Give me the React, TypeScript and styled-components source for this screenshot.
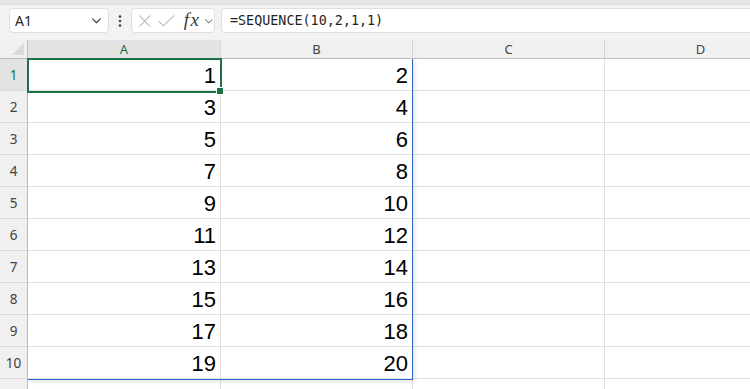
import * as React from "react";
import styled, { createGlobalStyle } from "styled-components";

const GlobalStyle = createGlobalStyle`
  body {
    margin: 0;
    background: #ffffff;
    font-family: "Noto Sans", "Open Sans", sans-serif;
  }
`;

const GREEN = "#1e7145";
const BLUE = "#2f66c9";
const GRID = "#e1e1e1";

const COLS = [193, 192, 192, 192];
const LETTERS = ["A", "B", "C", "D"];

export const Page = styled.div`
  width: 750px;
  height: 389px;
  overflow: hidden;
  display: flex;
  flex-direction: column;
`;

export const TopStrip = styled.div`
  height: 5px;
  background: #e7e6e5;
  box-shadow: inset 0 -1px 2px rgba(0, 0, 0, 0.04);
`;

export const Toolbar = styled.div`
  height: 35px;
  box-sizing: border-box;
  padding: 3px 0 0 9px;
  background: #f3f2f1;
  display: flex;
  align-items: flex-start;
  flex-shrink: 0;
`;

const Box = styled.div`
  height: 25px;
  box-sizing: border-box;
  background: #ffffff;
  border: 1px solid #e1dfdd;
  border-radius: 4px;
  display: flex;
  align-items: center;
`;

export const NameBox = styled(Box)`
  width: 100px;
  padding: 0 6px 0 5px;
  justify-content: space-between;
  font-size: 14px;
  color: #242424;
`;

export const Dots = styled.div`
  width: 22px;
  height: 25px;
  display: flex;
  align-items: center;
  justify-content: center;
`;

export const FxBox = styled(Box)`
  width: 84px;
  padding: 0 0 0 6px;
`;

export const FxLabel = styled.span`
  font-family: "Liberation Serif", serif;
  font-style: italic;
  font-size: 19px;
  color: #3b3b3b;
  margin: -2px 4px 0 8px;
  letter-spacing: 1.5px;
`;

export const FormulaBox = styled(Box)`
  flex: 1;
  margin-left: 6px;
  border-right: none;
  border-radius: 4px 0 0 4px;
  padding-left: 8px;
  font-family: "DejaVu Sans Mono", monospace;
  font-size: 13.4px;
  color: #1f1f1f;
`;

export const SheetWrap = styled.div`
  position: relative;
  flex: 1;
  overflow: hidden;
`;

export const Sheet = styled.div`
  display: grid;
  grid-template-columns: 28px ${COLS.map((c) => `${c}px`).join(" ")};
  grid-template-rows: 19px;
  grid-auto-rows: 32px;
`;

export const Corner = styled.div`
  background: #f0f0f0;
  border-right: 1px solid #bdbdbd;
  border-bottom: 1px solid #bdbdbd;
  box-sizing: border-box;
  position: relative;
  &::after {
    content: "";
    position: absolute;
    right: 3px;
    bottom: 3px;
    width: 0;
    height: 0;
    border-left: 12px solid transparent;
    border-bottom: 12px solid #d9d9d9;
  }
`;

export const ColHead = styled.div<{ $active?: boolean }>`
  background: ${(p) => (p.$active ? "#e3e3e3" : "#f0f0f0")};
  color: ${(p) => (p.$active ? GREEN : "#424242")};
  border-right: 1px solid #d6d6d6;
  border-bottom: 1px solid #bdbdbd;
  box-sizing: border-box;
  display: flex;
  align-items: center;
  justify-content: center;
  font-size: 13px;
`;

export const RowHead = styled.div<{ $active?: boolean }>`
  background: ${(p) => (p.$active ? "#e3e3e3" : "#f0f0f0")};
  color: ${(p) => (p.$active ? GREEN : "#424242")};
  border-right: 1px solid #bdbdbd;
  border-bottom: 1px solid #dadada;
  box-sizing: border-box;
  display: flex;
  align-items: center;
  justify-content: center;
  font-size: 13.5px;
`;

export const Cell = styled.div`
  border-right: 1px solid ${GRID};
  border-bottom: 1px solid ${GRID};
  box-sizing: border-box;
  display: flex;
  align-items: flex-end;
  justify-content: flex-end;
  padding: 0 4px 1px 0;
  font-family: "Liberation Sans", Arial, sans-serif;
  font-size: 22px;
  color: #000000;
`;

export const Spill = styled.div`
  position: absolute;
  left: 28px;
  top: 19px;
  width: 385px;
  height: 321px;
  box-sizing: border-box;
  border-right: 1px solid ${BLUE};
  border-bottom: 1px solid ${BLUE};
  box-shadow: 2px 2px 4px rgba(0, 0, 0, 0.1);
  pointer-events: none;
`;

export const Selection = styled.div`
  position: absolute;
  left: 27px;
  top: 18px;
  width: 195px;
  height: 35px;
  box-sizing: border-box;
  border: 2px solid ${GREEN};
  pointer-events: none;
  &::after {
    content: "";
    position: absolute;
    right: -4px;
    bottom: -4px;
    width: 6px;
    height: 6px;
    background: ${GREEN};
    border: 1px solid #ffffff;
  }
`;

const Chevron = ({ color = "#424242", size = 10 }: { color?: string; size?: number }) => (
  <svg width={size} height={size} viewBox="0 0 10 10" fill="none">
    <path d="M1.5 3.5 L5 7 L8.5 3.5" stroke={color} strokeWidth="1.1" strokeLinecap="round" strokeLinejoin="round" />
  </svg>
);

const DotsIcon = () => (
  <svg width="4" height="12" viewBox="0 0 4 12">
    <circle cx="2" cy="1.5" r="1.3" fill="#424242" />
    <circle cx="2" cy="6" r="1.3" fill="#424242" />
    <circle cx="2" cy="10.5" r="1.3" fill="#424242" />
  </svg>
);

const CancelIcon = () => (
  <svg width="14" height="14" viewBox="0 0 14 14" fill="none">
    <path d="M1.5 1.5 L12.5 12.5 M12.5 1.5 L1.5 12.5" stroke="#b8b8b8" strokeWidth="1.1" strokeLinecap="round" />
  </svg>
);

const EnterIcon = () => (
  <svg width="18" height="14" viewBox="0 0 18 14" fill="none" style={{ marginLeft: 7 }}>
    <path d="M1 7.5 L5.5 12 L16.5 1.5" stroke="#b8b8b8" strokeWidth="1.1" strokeLinecap="round" strokeLinejoin="round" />
  </svg>
);

const rows = Array.from({ length: 11 }, (_, i) => i + 1);

export default function App() {
  return (
    <Page>
      <GlobalStyle />
      <TopStrip />
      <Toolbar>
        <NameBox>
          <span>A1</span>
          <Chevron size={11} />
        </NameBox>
        <Dots>
          <DotsIcon />
        </Dots>
        <FxBox>
          <CancelIcon />
          <EnterIcon />
          <FxLabel>fx</FxLabel>
          <Chevron color="#8a8a8a" size={10} />
        </FxBox>
        <FormulaBox>=SEQUENCE(10,2,1,1)</FormulaBox>
      </Toolbar>
      <SheetWrap>
        <Sheet>
          <Corner />
          {LETTERS.map((l, i) => (
            <ColHead key={l} $active={i === 0}>
              {l}
            </ColHead>
          ))}
          {rows.map((r) => (
            <React.Fragment key={r}>
              <RowHead $active={r === 1}>{r <= 10 ? r : ""}</RowHead>
              {LETTERS.map((l, c) => (
                <Cell key={l}>{r <= 10 && c < 2 ? (r - 1) * 2 + c + 1 : ""}</Cell>
              ))}
            </React.Fragment>
          ))}
        </Sheet>
        <Spill />
        <Selection />
      </SheetWrap>
    </Page>
  );
}
